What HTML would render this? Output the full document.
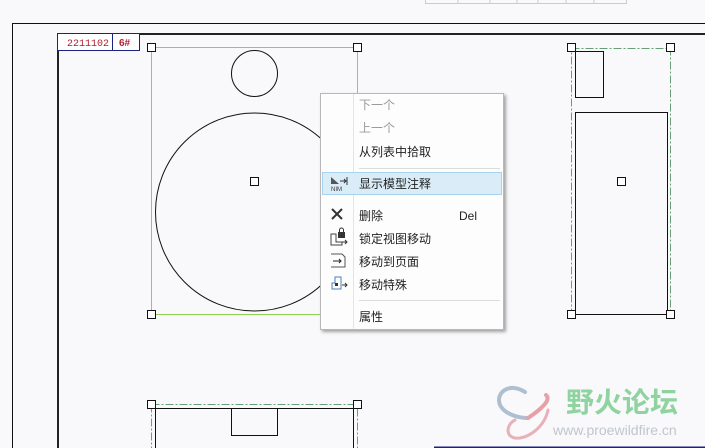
<!DOCTYPE html>
<html><head><meta charset="utf-8"><style>
body{margin:0;width:705px;height:448px;overflow:hidden;background:#f9f9fb;position:relative;font-family:"Liberation Sans","Noto Sans CJK SC",sans-serif}
.a{position:absolute}
.g{position:absolute;background:#8fd14f}
.menu{left:320px;top:93px;width:182px;height:235px;background:#fdfdfd;border:1px solid #b8b8b8;box-shadow:2px 2px 3px rgba(0,0,0,.35)}
.it{position:absolute;left:38px;font-size:12px;color:#222;line-height:14px}
.dis{color:#9a9a9a}
.sep{position:absolute;left:38px;right:3px;height:1px;background:#dcdcdc}
</style></head><body>
<svg class="a" style="left:0;top:0" width="705" height="448" shape-rendering="crispEdges">
<g stroke="#ccc" fill="none"><path d="M425.5 0V3.5H626.5V0M458 0V3M490 0V3M517 0V3M538 0V3M566 0V3M594 0V3"/></g>
<path d="M12.5 448V23.5H705" stroke="#111" fill="none"/>
<path d="M58 448V34H705" stroke="#222" stroke-width="2" fill="none"/>
<rect x="57.5" y="33.5" width="82" height="17" fill="#fff" stroke="#1a237e"/>
<path d="M112.5 33.5V50.5" stroke="#1a237e"/>
<text x="67" y="46" font-size="10" fill="#b02030" font-family="Liberation Mono">2211102</text>
<text x="119" y="46" font-size="10" fill="#b02030" font-weight="bold">6#</text>
<circle cx="254.5" cy="73.5" r="23" fill="none" stroke="#111" shape-rendering="auto"/>
<circle cx="254.5" cy="212" r="99" fill="none" stroke="#111" shape-rendering="auto"/>
<g fill="none" stroke="#2a7a3a" stroke-dasharray="8 2 2 2" opacity=".7"><rect x="571.5" y="48.5" width="99" height="266"/><rect x="151.5" y="404.5" width="206" height="50"/></g>
<g fill="none" stroke="#111"><rect x="575.5" y="51.5" width="28" height="46"/><rect x="575.5" y="112.5" width="92" height="202"/><path d="M155.5 448V408.5H353.5V448"/><rect x="231.5" y="408.5" width="46" height="27"/></g>
<path d="M434 447.5H705" stroke="#1a237e" stroke-width="2"/>
<g fill="none" stroke-width="4" stroke-linecap="round" shape-rendering="auto"><path d="M525 392C510 382 495 392 500 405C505 415 520 418 528 418" stroke="#aebfd0"/><path d="M528 418C540 410 552 400 546 395" stroke="#e8a0a8"/><path d="M515 420C505 425 505 440 520 438C532 436 545 425 548 410" stroke="#e8b0b8" stroke-width="3"/></g>
<text x="566" y="412" font-size="28" fill="#8fd4a0" font-weight="bold" font-family="Noto Sans CJK SC,sans-serif">野火论坛</text>
<text x="553" y="435" font-size="14" fill="#c0c6cc">www.proewildfire.cn</text>
</svg>
<div class="g" style="left:151px;top:47px;width:207px;height:1px"></div>
<div class="g" style="left:151px;top:314px;width:207px;height:1px"></div>
<div class="g" style="left:151px;top:47px;width:1px;height:268px"></div>
<div class="g" style="left:357px;top:47px;width:1px;height:268px"></div>
<svg class="a" style="left:0;top:0" width="705" height="448" shape-rendering="crispEdges">
<g fill="#fff" stroke="#111"><rect x="147.5" y="43.5" width="8" height="8"/><rect x="353.5" y="43.5" width="8" height="8"/><rect x="147.5" y="310.5" width="8" height="8"/><rect x="250.5" y="177.5" width="8" height="8"/>
<rect x="567.5" y="43.5" width="8" height="8"/><rect x="666.5" y="43.5" width="8" height="8"/><rect x="567.5" y="310.5" width="8" height="8"/><rect x="666.5" y="310.5" width="8" height="8"/><rect x="617.5" y="177.5" width="8" height="8"/>
<rect x="147.5" y="400.5" width="8" height="8"/><rect x="353.5" y="400.5" width="8" height="8"/></g>
</svg>
<div class="a menu">
<div class="a" style="left:32px;top:0;bottom:0;width:1px;background:#e4e4e4"></div>
<div class="it dis" style="top:4px">下一个</div>
<div class="it dis" style="top:27px">上一个</div>
<div class="it" style="top:51px">从列表中拾取</div>
<div class="sep" style="top:74px"></div>
<div class="a" style="left:1px;right:1px;top:78px;height:21px;background:#d9ecf8;border:1px solid #a8d2ee"></div>
<div class="it" style="top:83px">显示模型注释</div>
<svg class="a" style="left:8px;top:80px" width="20" height="18"><path d="M2 3V10H10Z" fill="#555"/><path d="M11 7H17M15 5L17 7L15 9M18 3V11" stroke="#333" fill="none"/><text x="2" y="17" font-size="6" fill="#333">NIM</text></svg>
<svg class="a" style="left:8px;top:112px" width="16" height="16"><path d="M3 3L13 13M13 3L3 13" stroke="#333" stroke-width="2"/></svg>
<svg class="a" style="left:8px;top:133px" width="20" height="20"><path d="M2 7H7V15H13V18H2Z" fill="none" stroke="#444"/><rect x="9" y="5" width="7" height="6" fill="#333"/><path d="M10.5 5V3A2 2 0 0 1 14.5 3V5" fill="none" stroke="#333"/><path d="M13 15H18M16 13L18 15L16 17" stroke="#333" fill="none"/></svg>
<svg class="a" style="left:8px;top:158px" width="20" height="18"><path d="M2 2H13L16 5V15H2" fill="none" stroke="#555"/><path d="M4 9H12M10 7L12 9L10 11" stroke="#222" fill="none"/></svg>
<svg class="a" style="left:8px;top:181px" width="20" height="18"><path d="M6 2H12V14H3V8H6Z" fill="none" stroke="#4a7fc0"/><rect x="6" y="8" width="3" height="3" fill="#333"/><path d="M13 10H18M16 8L18 10L16 12" stroke="#333" fill="none"/></svg>
<div class="it" style="top:115px">删除</div><div class="it" style="top:115px;left:138px">Del</div>
<div class="it" style="top:138px">锁定视图移动</div>
<div class="it" style="top:161px">移动到页面</div>
<div class="it" style="top:184px">移动特殊</div>
<div class="sep" style="top:206px"></div>
<div class="it" style="top:216px">属性</div>
</div>
</body></html>
